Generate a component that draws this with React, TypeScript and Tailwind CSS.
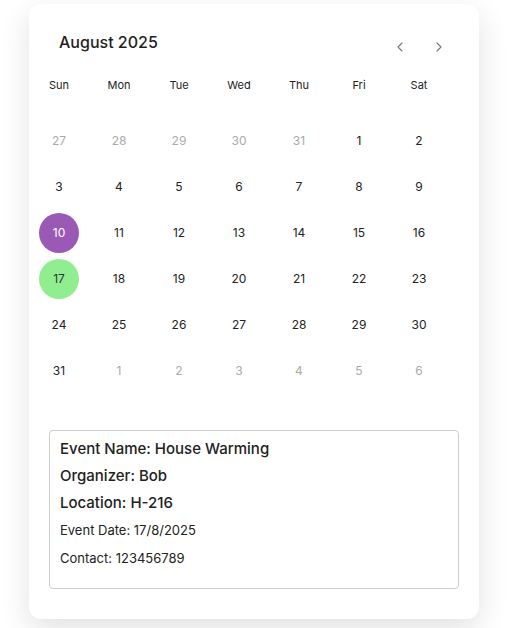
import { ChevronLeft, ChevronRight } from "lucide-react";

const WEEKDAYS = ["Sun", "Mon", "Tue", "Wed", "Thu", "Fri", "Sat"];

type Day = { day: number; current: boolean };

function buildMonth(): Day[] {
  const days: Day[] = [];
  for (let d = 27; d <= 31; d++) days.push({ day: d, current: false });
  for (let d = 1; d <= 31; d++) days.push({ day: d, current: true });
  for (let d = 1; d <= 6; d++) days.push({ day: d, current: false });
  return days;
}

const SELECTED = 10;
const EVENT_DAY = 17;

export default function App() {
  const days = buildMonth();

  return (
    <div
      className="min-h-screen bg-white pl-[29px] pt-[4px]"
      style={{ fontFamily: "Inter, 'Noto Sans', sans-serif" }}
    >
      <div className="w-[450px] rounded-xl bg-white pb-[30px] pt-[26px] shadow-[0_10px_30px_rgba(0,0,0,0.12)]">
        <div className="flex items-start justify-between pl-[30px] pr-[32px]">
          <h2 className="text-[16px] font-medium leading-[24px] text-[#1f1f1f]">
            August 2025
          </h2>
          <div className="mt-[9px] flex items-center gap-[23px] text-[#777]">
            <button type="button" aria-label="Previous month">
              <ChevronLeft size={16} strokeWidth={1.6} />
            </button>
            <button type="button" aria-label="Next month">
              <ChevronRight size={16} strokeWidth={1.6} />
            </button>
          </div>
        </div>

        <div className="mt-[20px] grid w-[420px] grid-cols-7">
          {WEEKDAYS.map((w) => (
            <div
              key={w}
              className="flex h-[20px] items-center justify-center text-[11px] text-[#222]"
            >
              {w}
            </div>
          ))}
        </div>

        <div className="mt-[23px] grid w-[420px] grid-cols-7">
          {days.map((d, i) => {
            const isSelected = d.current && d.day === SELECTED;
            const isEvent = d.current && d.day === EVENT_DAY;
            return (
              <div key={i} className="flex h-[46px] items-center justify-center">
                <span
                  className={
                    "flex h-[40px] w-[40px] items-center justify-center rounded-full text-[12px] " +
                    (isSelected
                      ? "bg-[#9b59b6] text-white"
                      : isEvent
                        ? "bg-[#90ee90] text-[#333]"
                        : d.current
                          ? "text-[#222]"
                          : "text-[#aaa]")
                  }
                >
                  {d.day}
                </span>
              </div>
            );
          })}
        </div>

        <div className="mx-[20px] mt-[36px] rounded border border-[#ccc] px-[10px] pb-[21px] pt-[9px] text-[#222]">
          <p className="text-[15px] font-medium leading-[18px]">
            Event Name: House Warming
          </p>
          <p className="mt-[9px] text-[15px] font-medium leading-[18px]">
            Organizer: Bob
          </p>
          <p className="mt-[9px] text-[15px] font-medium leading-[18px]">
            Location: H-216
          </p>
          <p className="mt-[9px] text-[13px] leading-[18px]">
            Event Date: 17/8/2025
          </p>
          <p className="mt-[10px] text-[13px] leading-[18px]">
            Contact: 123456789
          </p>
        </div>
      </div>
    </div>
  );
}
